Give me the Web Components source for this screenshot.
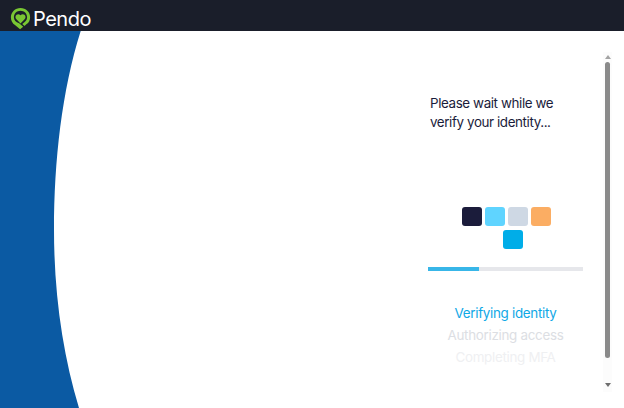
<!DOCTYPE html>
<html>
<head>
<meta charset="utf-8">
<style>
html, body { margin: 0; height: 100%; background: #fff; }
body { font-family: Inter, "Noto Sans", sans-serif; overflow: hidden; }
</style>
</head>
<body>
<login-page>
    <top-bar slot="top"></top-bar>
    <side-curve slot="side"></side-curve>
    <verify-panel slot="panel">
        <span slot="message">Please wait while we<br>verify your identity...</span>
        <loader-squares slot="loader"></loader-squares>
        <progress-bar slot="progress" value="33"></progress-bar>
        <step-list slot="steps">
            <step-item style="color:#0fa8e6">Verifying identity</step-item>
            <step-item style="color:#dcdee3">Authorizing access</step-item>
            <step-item style="color:#eff0f2">Completing MFA</step-item>
        </step-list>
    </verify-panel>
    <fake-scrollbar slot="scroll"></fake-scrollbar>
</login-page>
<script>
class LoginPage extends HTMLElement {
    constructor() {
        super();
        this.shadow = this.attachShadow({ mode: "open" });
    }
    connectedCallback() {
        this.shadow.innerHTML = `<style>
        :host{
            display:flex;
            flex-direction:column;
            height:408px;
        }
        .main{
            flex:1;
            display:flex;
            min-height:0;
        }
        .grow{ flex:1; min-width:0; }
        </style>
        <slot name="top"></slot>
        <div class="main">
            <slot name="side"></slot>
            <div class="grow"></div>
            <slot name="panel"></slot>
            <slot name="scroll"></slot>
        </div>`;
    }
}
window.customElements.define("login-page", LoginPage);

class TopBar extends HTMLElement {
    constructor() {
        super();
        this.shadow = this.attachShadow({ mode: "open" });
    }
    connectedCallback() {
        this.shadow.innerHTML = `<style>
        :host{
            display:flex;
            align-items:center;
            gap:2px;
            height:31px;
            padding:0 0 0 10px;
            box-sizing:border-box;
            background:#1a1e2a;
        }
        svg{ display:block; margin-top:6px; overflow:visible; }
        span{
            font:400 20px/24px Inter, sans-serif;
            color:#fff;
            letter-spacing:-.5px;
            margin-top:7px;
        }
        </style>
        <svg width="21" height="23" viewBox="0 0 20 22">
            <path fill="#79c733" d="M10 1C4.800 1 .8 5 .8 10c0 3.100 1.500 5.600 3.900 7.300L9.600 21.400l3-2.600L8.700 15.500C5.500 14.600 3.700 12.600 3.700 9.900 3.700 6.400 6.500 3.700 10 3.700s6.300 2.700 6.300 6.200c0 1.800-.9 3.400-2.300 4.500l-2.300 1.900 2.100 1.800 1.800-1.500c2.600-1.800 3.600-4.100 3.600-6.900C19.200 5 15.200 1 10 1z"/>
            <path fill="#79c733" d="M10 15.800l-3.900-4C4.800 10.400 4.900 8.400 6.200 7.400c1.200-.9 2.700-.7 3.800.5 1.100-1.200 2.600-1.400 3.800-.5 1.300 1 1.400 3 .1 4.400z"/>
        </svg>
        <span>Pendo</span>`;
    }
}
window.customElements.define("top-bar", TopBar);

class SideCurve extends HTMLElement {
    constructor() {
        super();
        this.shadow = this.attachShadow({ mode: "open" });
    }
    connectedCallback() {
        this.shadow.innerHTML = `<style>
        :host{
            display:block;
            width:90px;
            flex:none;
        }
        svg{ display:block; }
        </style>
        <svg width="90" height="377" viewBox="0 1 90 377">
            <path fill="#0b5aa3" d="M0 0H81C62 60 54 130 54 200C54 265 63 325 79 378H0Z"/>
        </svg>`;
    }
}
window.customElements.define("side-curve", SideCurve);

class VerifyPanel extends HTMLElement {
    constructor() {
        super();
        this.shadow = this.attachShadow({ mode: "open" });
    }
    connectedCallback() {
        this.shadow.innerHTML = `<style>
        :host{
            display:flex;
            flex-direction:column;
            width:155px;
            flex:none;
            padding-top:63px;
            box-sizing:border-box;
        }
        .msg{
            padding-left:2px;
            font-size:13.4px;
            letter-spacing:-.4px;
            line-height:18.5px;
            color:#1b1c3b;
            white-space:nowrap;
            height:113px;
        }
        </style>
        <div class="msg"><slot name="message"></slot></div>
        <slot name="loader"></slot>
        <slot name="progress"></slot>
        <slot name="steps"></slot>`;
    }
}
window.customElements.define("verify-panel", VerifyPanel);

class LoaderSquares extends HTMLElement {
    constructor() {
        super();
        this.shadow = this.attachShadow({ mode: "open" });
    }
    connectedCallback() {
        this.shadow.innerHTML = `<style>
        :host{
            display:grid;
            grid-template-columns:repeat(4,20px);
            grid-auto-rows:19px;
            gap:4px 3px;
            justify-content:center;
            padding-left:1px;
        }
        i{
            display:block;
            border-radius:3px;
        }
        .last{ grid-column:3; margin-left:-5px; margin-right:5px; }
        </style>
        <i style="background:#1b1c3b"></i>
        <i style="background:#5fd4ff"></i>
        <i style="background:#ced8e4"></i>
        <i style="background:#fbad63"></i>
        <i class="last" style="background:#00ade8"></i>`;
    }
}
window.customElements.define("loader-squares", LoaderSquares);

class ProgressBar extends HTMLElement {
    constructor() {
        super();
        this.shadow = this.attachShadow({ mode: "open" });
    }
    connectedCallback() {
        const value = this.getAttribute("value") || 0;
        this.shadow.innerHTML = `<style>
        :host{
            display:block;
            height:4px;
            margin-top:18px;
            background:#e6e7eb;
        }
        div{
            height:100%;
            background:#38b6e8;
        }
        </style>
        <div style="width:${value}%"></div>`;
    }
}
window.customElements.define("progress-bar", ProgressBar);

class StepList extends HTMLElement {
    constructor() {
        super();
        this.shadow = this.attachShadow({ mode: "open" });
    }
    connectedCallback() {
        this.shadow.innerHTML = `<style>
        :host{
            display:flex;
            flex-direction:column;
            margin-top:31px;
            text-align:center;
        }
        </style>
        <slot></slot>`;
    }
}
window.customElements.define("step-list", StepList);

class StepItem extends HTMLElement {
    constructor() {
        super();
        this.shadow = this.attachShadow({ mode: "open" });
    }
    connectedCallback() {
        this.shadow.innerHTML = `<style>
        :host{
            display:block;
            font-size:13.4px;
            letter-spacing:-.3px;
            line-height:22px;
            white-space:nowrap;
        }
        </style>
        <slot></slot>`;
    }
}
window.customElements.define("step-item", StepItem);

class FakeScrollbar extends HTMLElement {
    constructor() {
        super();
        this.shadow = this.attachShadow({ mode: "open" });
    }
    connectedCallback() {
        this.shadow.innerHTML = `<style>
        :host{
            display:flex;
            flex-direction:column;
            align-items:center;
            width:9px;
            margin:21px 12px 0 20px;
            flex:none;
            height:340px;
            background:#fcfcfc;
        }
        .up,.down{
            width:0;height:0;
            border-left:3px solid transparent;
            border-right:3px solid transparent;
        }
        .up{ border-bottom:4px solid #a3a3a3; margin-top:3px; }
        .down{ border-top:4px solid #6e6e6e; margin-top:auto; margin-bottom:5px; }
        .thumb{
            width:5px;
            height:296px;
            margin-top:3px;
            border-radius:3px;
            background:#8a8a8a;
        }
        </style>
        <div class="up"></div>
        <div class="thumb"></div>
        <div class="down"></div>`;
    }
}
window.customElements.define("fake-scrollbar", FakeScrollbar);
</script>
</body>
</html>
